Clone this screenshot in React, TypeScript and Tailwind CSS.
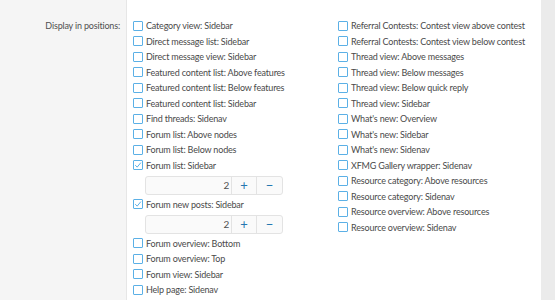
import React from 'react';

const leftItems: { label: string; checked?: boolean; value?: number }[] = [
  { label: 'Category view: Sidebar' },
  { label: 'Direct message list: Sidebar' },
  { label: 'Direct message view: Sidebar' },
  { label: 'Featured content list: Above features' },
  { label: 'Featured content list: Below features' },
  { label: 'Featured content list: Sidebar' },
  { label: 'Find threads: Sidenav' },
  { label: 'Forum list: Above nodes' },
  { label: 'Forum list: Below nodes' },
  { label: 'Forum list: Sidebar', checked: true, value: 2 },
  { label: 'Forum new posts: Sidebar', checked: true, value: 2 },
  { label: 'Forum overview: Bottom' },
  { label: 'Forum overview: Top' },
  { label: 'Forum view: Sidebar' },
  { label: 'Help page: Sidenav' },
];

const rightItems = [
  'Referral Contests: Contest view above contest',
  'Referral Contests: Contest view below contest',
  'Thread view: Above messages',
  'Thread view: Below messages',
  'Thread view: Below quick reply',
  'Thread view: Sidebar',
  "What's new: Overview",
  "What's new: Sidebar",
  "What's new: Sidenav",
  'XFMG Gallery wrapper: Sidenav',
  'Resource category: Above resources',
  'Resource category: Sidenav',
  'Resource overview: Above resources',
  'Resource overview: Sidenav',
];

const Box = ({ checked }: { checked?: boolean }) => (
  <span className="w-[10px] h-[10px] border border-[#5bb0e6] rounded-[1px] bg-white flex items-center justify-center shrink-0">
    {checked && (
      <svg width="8" height="8" viewBox="0 0 8 8" fill="none">
        <path d="M1.2 4.2 L3.2 6.1 L6.9 1.6" stroke="#5bb0e6" strokeWidth="1" />
      </svg>
    )}
  </span>
);

const Row = ({ label, checked }: { label: string; checked?: boolean }) => (
  <div className="h-[15.5px] flex items-center gap-[3px] whitespace-nowrap">
    <Box checked={checked} />
    <span>{label}</span>
  </div>
);

const Spinbox = ({ value }: { value: number }) => (
  <div className="ml-[12px] mt-[3px] mb-[1.5px] w-[138px] h-[19px] flex border border-[#e3e3e3] rounded-[3px] bg-[#fafafa] text-[#2577b1]">
    <div className="flex-1 text-right pr-[2px] text-[10px] text-[#505050] leading-[17px]">{value}</div>
    <div className="w-[25px] border-l border-[#e3e3e3] flex items-center justify-center text-[13px]">+</div>
    <div className="w-[26px] border-l border-[#e3e3e3] flex items-center justify-center text-[13px]">−</div>
  </div>
);

export default function App() {
  return (
    <div className="w-[555px] h-[300px] overflow-hidden flex bg-[#ebebeb] text-[9px] tracking-[-0.18px] text-[#4a4a4a] font-['Lato',sans-serif]">
      <div className="w-[127px] bg-[#f5f5f5] border-r border-[#e6e6e6] pt-[18px] pr-[6px] text-right text-[#505050]">
        <div className="h-[15.5px] leading-[15.5px]">Display in positions:</div>
      </div>
      <div className="w-[414px] bg-white pl-[6px] pt-[18px] grid grid-cols-[205px_1fr] content-start">
        <div>
          {leftItems.map((it) => (
            <React.Fragment key={it.label}>
              <Row label={it.label} checked={it.checked} />
              {it.value !== undefined && <Spinbox value={it.value} />}
            </React.Fragment>
          ))}
        </div>
        <div>
          {rightItems.map((l) => (
            <Row key={l} label={l} />
          ))}
        </div>
      </div>
    </div>
  );
}
